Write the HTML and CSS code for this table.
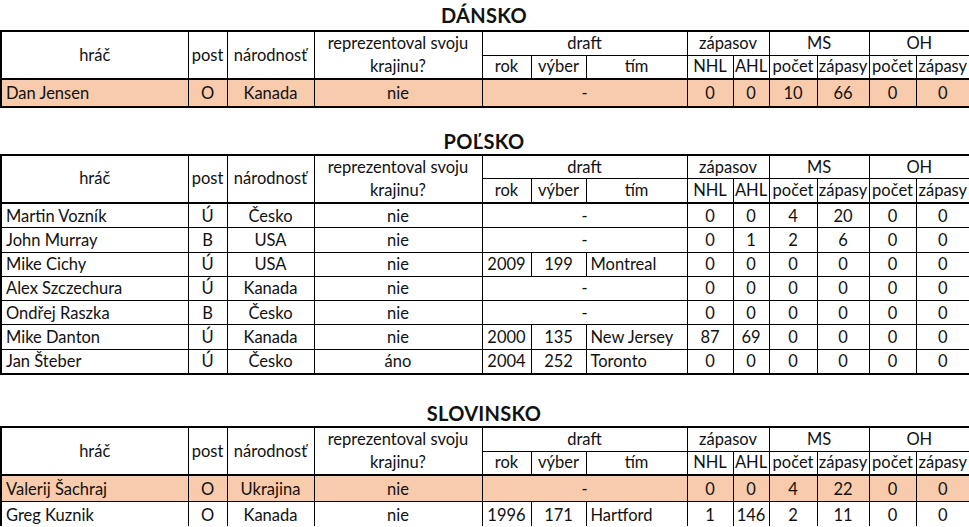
FILE: index.html
```html
<!DOCTYPE html>
<html lang="sk">
<head>
<meta charset="utf-8">
<title>Hráči</title>
<link rel="stylesheet" href="styles.css">
</head>
<body>
<section class="block first">
  <h2 class="title">DÁNSKO</h2>
  <table class="grid">
    <colgroup>
      <col class="c-name"><col class="c-post"><col class="c-nat"><col class="c-rep">
      <col class="c-rok"><col class="c-vyb"><col class="c-tim">
      <col class="c-nhl"><col class="c-ahl"><col class="c-msp"><col class="c-msz"><col class="c-ohp"><col class="c-ohz">
    </colgroup>
    <thead>
      <tr class="h1">
        <th rowspan="2">hráč</th><th rowspan="2">post</th><th rowspan="2">národnosť</th>
        <th rowspan="2" class="rep">reprezentoval svoju<br>krajinu?</th>
        <th colspan="3">draft</th><th colspan="2">zápasov</th><th colspan="2">MS</th><th colspan="2">OH</th>
      </tr>
      <tr class="h2">
        <th>rok</th><th>výber</th><th>tím</th><th>NHL</th><th>AHL</th><th>počet</th><th>zápasy</th><th>počet</th><th>zápasy</th>
      </tr>
    </thead>
    <tbody>
      <tr class="hl"><td class="name">Dan Jensen</td><td>O</td><td>Kanada</td><td>nie</td><td colspan="3" class="none">-</td><td>0</td><td>0</td><td>10</td><td>66</td><td>0</td><td>0</td></tr>
    </tbody>
  </table>
</section>

<section class="block second">
  <h2 class="title">POĽSKO</h2>
  <table class="grid">
    <colgroup>
      <col class="c-name"><col class="c-post"><col class="c-nat"><col class="c-rep">
      <col class="c-rok"><col class="c-vyb"><col class="c-tim">
      <col class="c-nhl"><col class="c-ahl"><col class="c-msp"><col class="c-msz"><col class="c-ohp"><col class="c-ohz">
    </colgroup>
    <thead>
      <tr class="h1">
        <th rowspan="2">hráč</th><th rowspan="2">post</th><th rowspan="2">národnosť</th>
        <th rowspan="2" class="rep">reprezentoval svoju<br>krajinu?</th>
        <th colspan="3">draft</th><th colspan="2">zápasov</th><th colspan="2">MS</th><th colspan="2">OH</th>
      </tr>
      <tr class="h2">
        <th>rok</th><th>výber</th><th>tím</th><th>NHL</th><th>AHL</th><th>počet</th><th>zápasy</th><th>počet</th><th>zápasy</th>
      </tr>
    </thead>
    <tbody>
      <tr><td class="name">Martin Vozník</td><td>Ú</td><td>Česko</td><td>nie</td><td colspan="3" class="none">-</td><td>0</td><td>0</td><td>4</td><td>20</td><td>0</td><td>0</td></tr>
      <tr><td class="name">John Murray</td><td>B</td><td>USA</td><td>nie</td><td colspan="3" class="none">-</td><td>0</td><td>1</td><td>2</td><td>6</td><td>0</td><td>0</td></tr>
      <tr><td class="name">Mike Cichy</td><td>Ú</td><td>USA</td><td>nie</td><td>2009</td><td>199</td><td class="team">Montreal</td><td>0</td><td>0</td><td>0</td><td>0</td><td>0</td><td>0</td></tr>
      <tr><td class="name">Alex Szczechura</td><td>Ú</td><td>Kanada</td><td>nie</td><td colspan="3" class="none">-</td><td>0</td><td>0</td><td>0</td><td>0</td><td>0</td><td>0</td></tr>
      <tr><td class="name">Ondřej Raszka</td><td>B</td><td>Česko</td><td>nie</td><td colspan="3" class="none">-</td><td>0</td><td>0</td><td>0</td><td>0</td><td>0</td><td>0</td></tr>
      <tr><td class="name">Mike Danton</td><td>Ú</td><td>Kanada</td><td>nie</td><td>2000</td><td>135</td><td class="team">New Jersey</td><td>87</td><td>69</td><td>0</td><td>0</td><td>0</td><td>0</td></tr>
      <tr><td class="name">Jan Šteber</td><td>Ú</td><td>Česko</td><td>áno</td><td>2004</td><td>252</td><td class="team">Toronto</td><td>0</td><td>0</td><td>0</td><td>0</td><td>0</td><td>0</td></tr>
    </tbody>
  </table>
</section>

<section class="block third">
  <h2 class="title">SLOVINSKO</h2>
  <table class="grid">
    <colgroup>
      <col class="c-name"><col class="c-post"><col class="c-nat"><col class="c-rep">
      <col class="c-rok"><col class="c-vyb"><col class="c-tim">
      <col class="c-nhl"><col class="c-ahl"><col class="c-msp"><col class="c-msz"><col class="c-ohp"><col class="c-ohz">
    </colgroup>
    <thead>
      <tr class="h1">
        <th rowspan="2">hráč</th><th rowspan="2">post</th><th rowspan="2">národnosť</th>
        <th rowspan="2" class="rep">reprezentoval svoju<br>krajinu?</th>
        <th colspan="3">draft</th><th colspan="2">zápasov</th><th colspan="2">MS</th><th colspan="2">OH</th>
      </tr>
      <tr class="h2">
        <th>rok</th><th>výber</th><th>tím</th><th>NHL</th><th>AHL</th><th>počet</th><th>zápasy</th><th>počet</th><th>zápasy</th>
      </tr>
    </thead>
    <tbody>
      <tr class="hl"><td class="name">Valerij Šachraj</td><td>O</td><td>Ukrajina</td><td>nie</td><td colspan="3" class="none">-</td><td>0</td><td>0</td><td>4</td><td>22</td><td>0</td><td>0</td></tr>
      <tr><td class="name">Greg Kuznik</td><td>O</td><td>Kanada</td><td>nie</td><td>1996</td><td>171</td><td class="team">Hartford</td><td>1</td><td>146</td><td>2</td><td>11</td><td>0</td><td>0</td></tr>
    </tbody>
  </table>
</section>
</body>
</html>
```

FILE: styles.css
```css
html, body {
  margin: 0;
  padding: 0;
  background: #ffffff;
}
body {
  font-family: "Lato", "Open Sans", sans-serif;
  font-size: 16.5px;
  color: #111;
  width: 969px;
  overflow: hidden;
}
.block {
  display: flex;
  flex-direction: column;
}
.title {
  margin: 0;
  font-size: 20px;
  letter-spacing: 0.3px;
  font-weight: bold;
  text-align: center;
  width: 968px;
  display: flex;
  align-items: center;
  justify-content: center;
}
.first .title { height: 30px; }
.second { margin-top: 23px; }
.second .title { height: 26px; }
.third { margin-top: 27px; }
.third .title { height: 27px; }

.grid {
  border-collapse: collapse;
  table-layout: fixed;
  width: 969px;
  border: 2px solid #000;
}
.grid th, .grid td {
  border: 1px solid #000;
  padding: 0;
  height: 22.9px;
  line-height: 22px;
  text-align: center;
  font-weight: normal;
  white-space: nowrap;
  overflow: hidden;
}
.third .grid td { height: 23.5px; }
.grid thead th { height: 21px; line-height: 21px; }
.grid thead tr.h2 th { border-bottom: 2px solid #000; }
.grid thead th[rowspan] { border-bottom: 2px solid #000; }
.grid th.rep { line-height: 23px; }
.grid td.name { text-align: left; padding-left: 4px; }
.grid td.team { text-align: left; padding-left: 4px; }
.grid tr.hl td { background: #f8cbad; }

.c-name { width: 187px; }
.c-post { width: 39px; }
.c-nat { width: 87px; }
.c-rep { width: 168px; }
.c-rok { width: 49px; }
.c-vyb { width: 55px; }
.c-tim { width: 101px; }
.c-nhl { width: 46px; }
.c-ahl { width: 36px; }
.c-msp { width: 48px; }
.c-msz { width: 52px; }
.c-ohp { width: 47px; }
.c-ohz { width: 54px; }
```
